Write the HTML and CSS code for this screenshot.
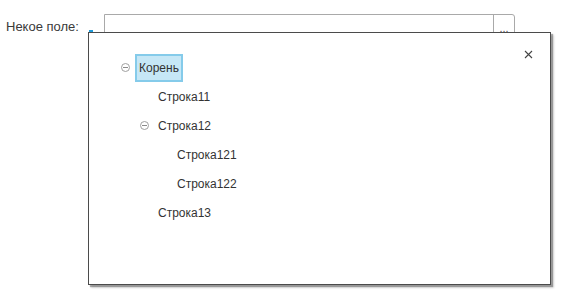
FILE: index.html
```html
<!DOCTYPE html>
<html>
<head>
    <title>Некое поле</title>
    <link rel="stylesheet" href="styles.css">
</head>
<body>
    <div class="form">
        <div class="field">
            <label class="field-label" for="value">Некое поле:</label>
            <span class="mark"></span>
            <div class="input">
                <input type="text" id="value">
                <span class="choice">...</span>
            </div>
        </div>

        <div class="popup">
            <span class="close">
                <svg width="9" height="9" viewBox="0 0 9 9">
                    <path d="M1 1 L8 8 M8 1 L1 8" stroke="#444" stroke-width="1.1" fill="none"/>
                </svg>
            </span>
            <div class="tree">
                <div class="row level-0">
                    <span class="toggle"></span>
                    <span class="node selected">Корень</span>
                </div>
                <div class="row level-1">
                    <span class="toggle empty"></span>
                    <span class="node">Строка11</span>
                </div>
                <div class="row level-1">
                    <span class="toggle"></span>
                    <span class="node">Строка12</span>
                </div>
                <div class="row level-2">
                    <span class="toggle empty"></span>
                    <span class="node">Строка121</span>
                </div>
                <div class="row level-2">
                    <span class="toggle empty"></span>
                    <span class="node">Строка122</span>
                </div>
                <div class="row level-1">
                    <span class="toggle empty"></span>
                    <span class="node">Строка13</span>
                </div>
            </div>
        </div>
    </div>
</body>
</html>
```

FILE: styles.css
```css
body {
    margin: 0;
    font-family: 'Liberation Sans', Arial, sans-serif;
    font-size: 12px;
    color: #333;
    background: #fff;
}

.form {
    position: relative;
    height: 295px;
}

.field {
    display: flex;
    align-items: center;
    height: 24px;
    padding: 14px 0 0 6px;
}

.field-label {
    width: 83px;
    font-size: 13px;
    color: #3a3a3a;
}

.mark {
    align-self: flex-end;
    width: 4px;
    height: 2px;
    margin-bottom: 6px;
    background: #1e9ad8;
}

.input {
    display: flex;
    margin-left: 11px;
    width: 411px;
    height: 24px;
    box-sizing: border-box;
    border: 1px solid #a9a9a9;
    border-radius: 0 3px 3px 0;
}

.input input[type="text"] {
    flex: 1;
    border: none;
    outline: none;
    padding: 0 4px;
    font: inherit;
}

.choice {
    width: 20px;
    border-left: 1px solid #a9a9a9;
    font-size: 11px;
    color: #555;
    text-align: center;
    line-height: 27px;
}

.popup {
    position: absolute;
    left: 88px;
    top: 32px;
    width: 463px;
    height: 253px;
    box-sizing: border-box;
    border: 1px solid #4b4b4b;
    background: #fff;
    box-shadow: 2px 2px 1px rgba(0, 0, 0, 0.3), 3px 3px 2px rgba(0, 0, 0, 0.15);
}

.close {
    position: absolute;
    top: 17px;
    right: 17px;
    display: flex;
}

.tree {
    padding: 20px 0 0 28px;
}

.row {
    display: flex;
    align-items: center;
    height: 29px;
}

.level-1 {
    padding-left: 19px;
}

.level-2 {
    padding-left: 38px;
}

.toggle {
    position: relative;
    width: 9px;
    height: 9px;
    margin: 0 5px 0 4px;
    box-sizing: border-box;
    border: 1px solid #a0a0a0;
    border-radius: 50%;
}

.toggle::after {
    content: '';
    position: absolute;
    left: 1px;
    right: 1px;
    top: 3px;
    height: 1px;
    background: #8a8a8a;
}

.toggle.empty {
    border-color: transparent;
}

.toggle.empty::after {
    display: none;
}

.node {
    padding: 0 2px;
    line-height: 24px;
    border: 2px solid transparent;
    color: #333;
}

.node.selected {
    background: #c6e7f6;
    border-color: #85cbea;
}
```
